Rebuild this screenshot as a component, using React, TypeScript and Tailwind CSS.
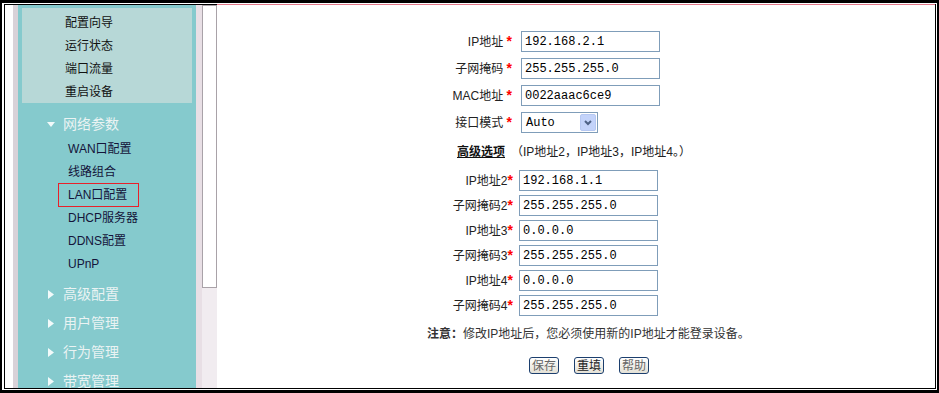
import React from "react";

const cjk = "font-['Liberation_Sans','Noto_Sans_CJK_SC',sans-serif]";
const mono = "font-['Liberation_Mono','Noto_Sans_CJK_SC',monospace]";

function Down() {
  return (
    <svg width="8" height="7" viewBox="0 0 8 7">
      <polygon points="0,1 8,1 4,6" fill="#f2fafa" />
    </svg>
  );
}

function Right() {
  return (
    <svg width="7" height="9" viewBox="0 0 7 9">
      <polygon points="1,0 7,4.5 1,9" fill="#f2fafa" />
    </svg>
  );
}

function Group({ label, open, className = "" }: { label: string; open?: boolean; className?: string }) {
  return (
    <div className={`flex items-center pl-[29px] ${className}`}>
      <span className="w-[16px] flex items-center">{open ? <Down /> : <Right />}</span>
      <span className="text-[14px] text-[#eaf3f3]">{label}</span>
    </div>
  );
}

function Sidebar() {
  const top = ["配置向导", "运行状态", "端口流量", "重启设备"];
  const subs = ["WAN口配置", "线路组合", "LAN口配置", "DHCP服务器", "DDNS配置", "UPnP"];
  return (
    <div className="w-[212px] shrink-0 flex border-t border-black">
      <div className="w-[8px] bg-white" />
      <div className="w-[5px] bg-[#d9d2d8]" />
      <div className={`w-[178px] bg-[#85cacd] overflow-hidden ${cjk} text-[12px]`}>
        <div className="mt-[3px] ml-[4px] w-[170px] h-[95px] bg-[#b7d8d7] pt-[3px] pl-[43px] text-[#111]">
          {top.map((t) => (
            <div key={t} className="h-[23px] flex items-center">{t}</div>
          ))}
        </div>
        <Group label="网络参数" open className="mt-[8px] h-[26px]" />
        {subs.map((s) => (
          <div key={s} className="h-[23px] flex items-center pl-[40px] text-[#14143a]">
            {s === "LAN口配置" ? (
              <span className="h-[24px] w-[81px] flex items-center pl-[9px] border border-[#e8202a]">{s}</span>
            ) : (
              <span className="pl-[10px]">{s}</span>
            )}
          </div>
        ))}
        <Group label="高级配置" className="mt-[5px] h-[29px]" />
        <Group label="用户管理" className="h-[29px]" />
        <Group label="行为管理" className="h-[29px]" />
        <Group label="带宽管理" className="h-[29px]" />
      </div>
      <div className="w-[6px] bg-[#e8dfe5]" />
      <div className="w-[15px] bg-[#f1ecf0]">
        <div className="h-[283px] bg-white border border-[#a9a2a8]" />
      </div>
    </div>
  );
}

function Star() {
  return <span className="text-[#ff0000] font-bold text-[14px] leading-none">*</span>;
}

function Input({ value }: { value: string }) {
  return (
    <div className={`w-[139px] h-[21px] border border-[#7f9db9] bg-white flex items-center pl-[3px] text-[12px] text-black ${mono}`}>
      {value}
    </div>
  );
}

function Btn({ label, dark }: { label: string; dark?: boolean }) {
  return (
    <div
      className={`w-[30px] h-[17px] rounded-[3px] border border-[#1c3f6e] bg-gradient-to-b from-white to-[#e4e1d6] flex items-center justify-center text-[12px] ${dark ? "text-[#222]" : "text-[#666]"}`}
    >
      {label}
    </div>
  );
}

export default function App() {
  const main = [
    { l: "IP地址", v: "192.168.2.1" },
    { l: "子网掩码", v: "255.255.255.0" },
    { l: "MAC地址", v: "0022aaac6ce9" },
  ];
  const adv = [
    { l: "IP地址2", v: "192.168.1.1" },
    { l: "子网掩码2", v: "255.255.255.0" },
    { l: "IP地址3", v: "0.0.0.0" },
    { l: "子网掩码3", v: "255.255.255.0" },
    { l: "IP地址4", v: "0.0.0.0" },
    { l: "子网掩码4", v: "255.255.255.0" },
  ];
  return (
    <div className="w-[939px] h-[393px] bg-white border-black border-t-[3px] border-b-[3px] border-x-2 pt-px pb-px pl-[2px] pr-px">
      <div className="flex h-full border-l border-r border-b border-black">
        <Sidebar />
        <div className={`flex-1 border-t border-[#e2788a] pt-[26px] text-[12px] text-[#222] ${cjk}`}>
          {main.map((r) => (
            <div key={r.l} className="flex items-center h-[21px] mb-[6px]">
              <div className="w-[295px] text-right">
                {r.l} <Star />
              </div>
              <div className="ml-[9px]">
                <Input value={r.v} />
              </div>
            </div>
          ))}
          <div className="flex items-center h-[21px]">
            <div className="w-[295px] text-right">
              接口模式 <Star />
            </div>
            <div className={`ml-[9px] w-[77px] h-[21px] border border-[#7f9db9] flex items-center justify-between pl-[4px] pr-px ${mono}`}>
              <span className="text-black">Auto</span>
              <span className="w-[16px] h-[17px] rounded-[2px] bg-[#c3d3fa] border border-[#b6c8f2] flex items-center justify-center">
                <svg width="8" height="6" viewBox="0 0 8 6">
                  <path d="M1 1 L4 4 L7 1" stroke="#4d6185" strokeWidth="2" fill="none" />
                </svg>
              </span>
            </div>
          </div>
          <div className="flex items-center h-[20px] mt-[9px]">
            <div className="w-[288px] text-right font-bold underline text-[#111]">高级选项</div>
            <div className="ml-[6px]">（IP地址2，IP地址3，IP地址4。）</div>
          </div>
          <div className="mt-[8px]">
            {adv.map((r) => (
              <div key={r.l} className="flex items-center h-[21px] mb-[4px]">
                <div className="w-[296px] text-right">
                  {r.l}
                  <Star />
                </div>
                <div className="ml-[6px]">
                  <Input value={r.v} />
                </div>
              </div>
            ))}
          </div>
          <div className="mt-[10px] h-[16px] flex items-center pl-[210px]">
            <span className="font-bold text-[#333]">注意：</span>
            <span className="text-[#333]">修改IP地址后，您必须使用新的IP地址才能登录设备。</span>
          </div>
          <div className="mt-[15px] flex gap-[15px] pl-[312px]">
            <Btn label="保存" />
            <Btn label="重填" dark />
            <Btn label="帮助" />
          </div>
        </div>
      </div>
    </div>
  );
}
